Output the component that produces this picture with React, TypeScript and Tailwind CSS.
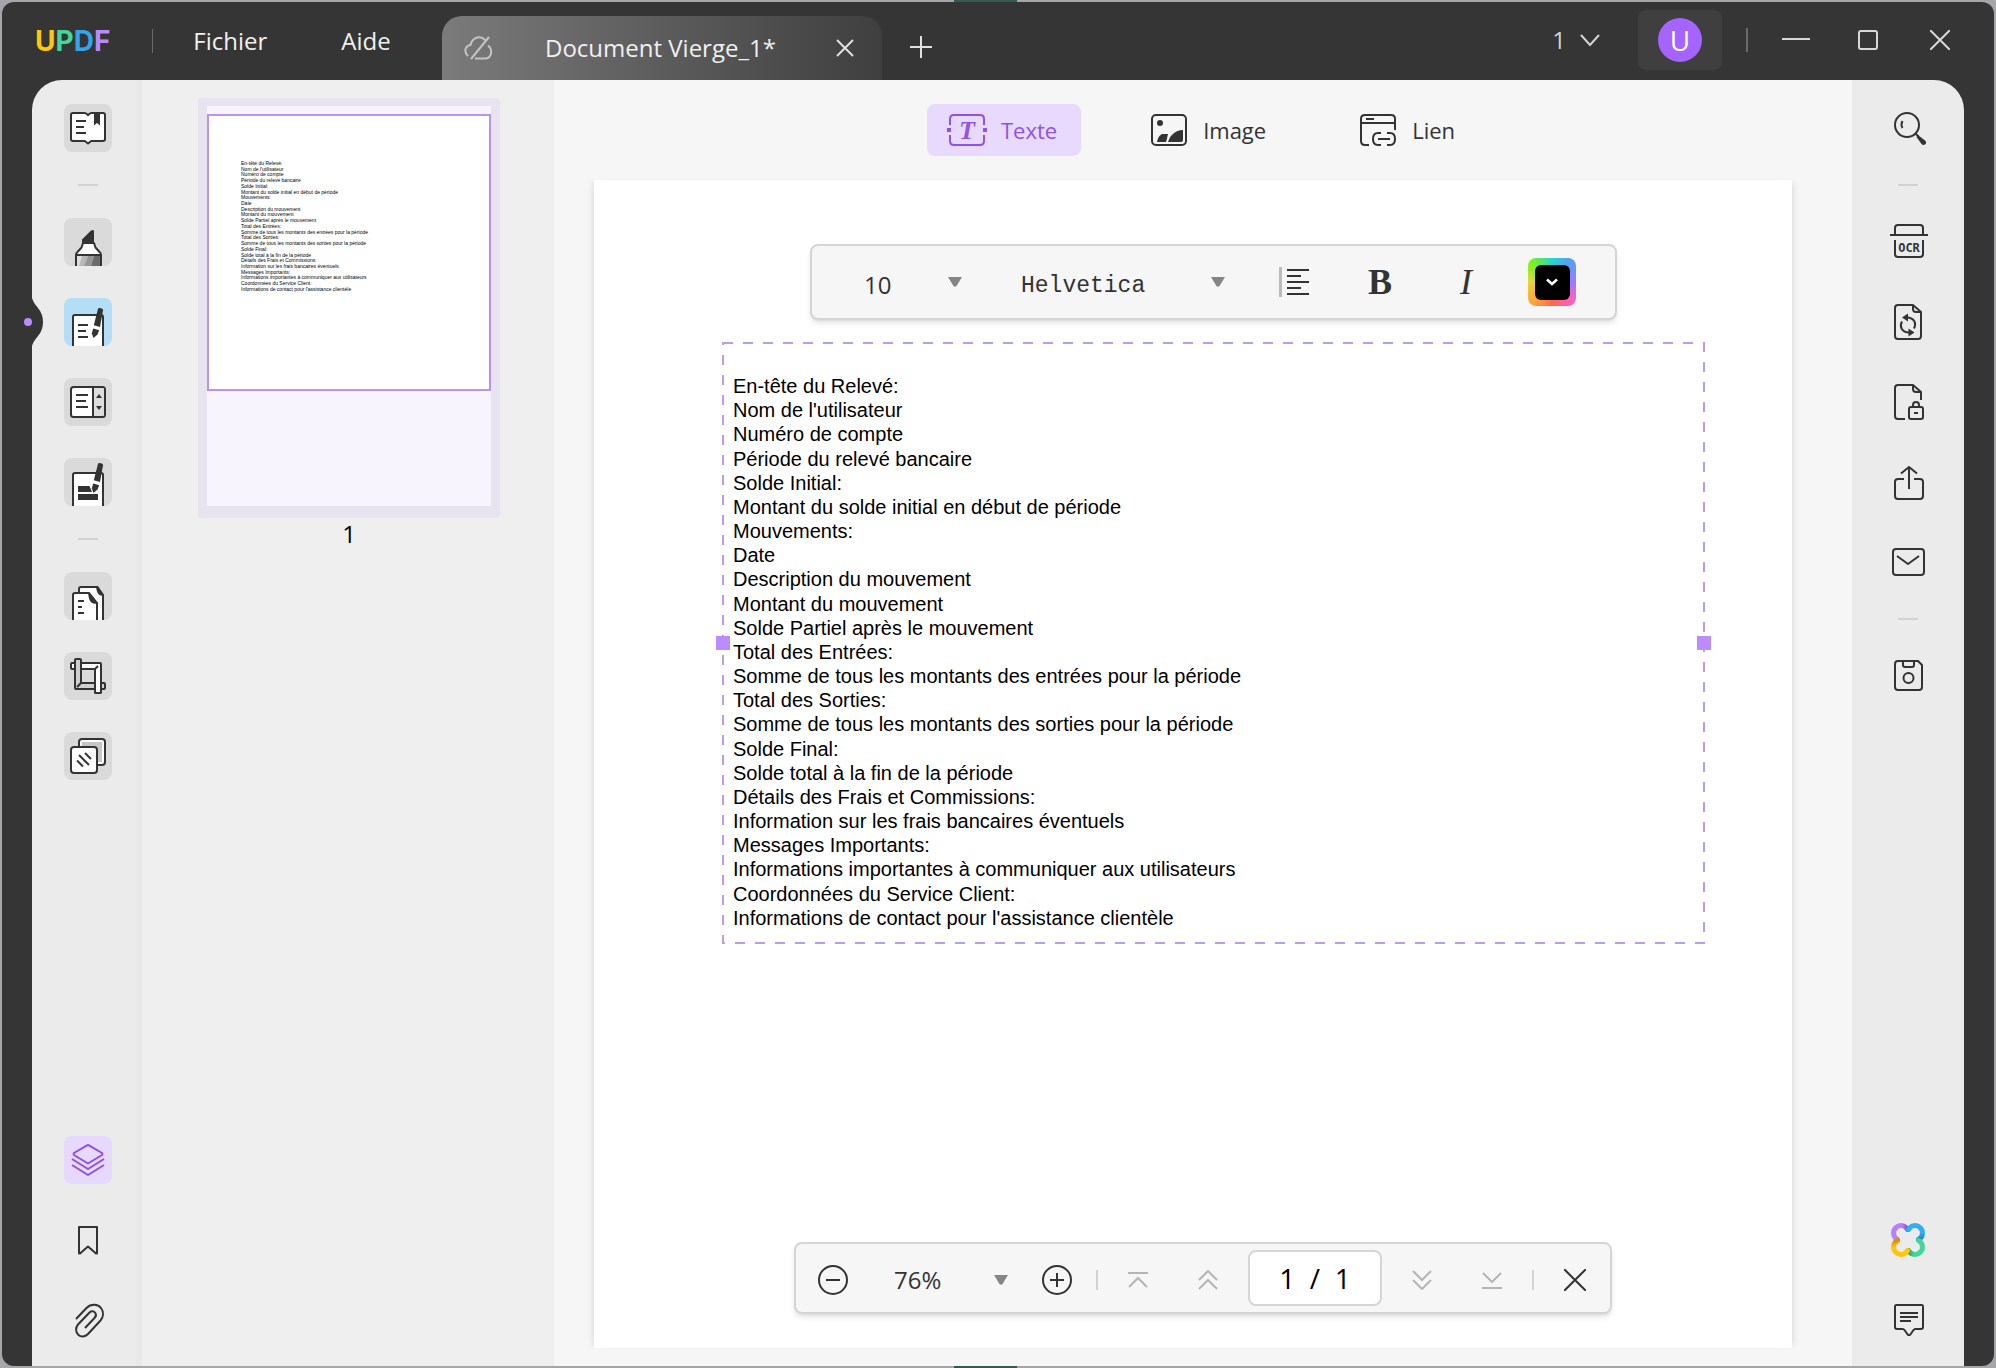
import React from 'react';

const LINES = [
  'En-tête du Relevé:',
  "Nom de l'utilisateur",
  'Numéro de compte',
  'Période du relevé bancaire',
  'Solde Initial:',
  'Montant du solde initial en début de période',
  'Mouvements:',
  'Date',
  'Description du mouvement',
  'Montant du mouvement',
  'Solde Partiel après le mouvement',
  'Total des Entrées:',
  'Somme de tous les montants des entrées pour la période',
  'Total des Sorties:',
  'Somme de tous les montants des sorties pour la période',
  'Solde Final:',
  'Solde total à la fin de la période',
  'Détails des Frais et Commissions:',
  'Information sur les frais bancaires éventuels',
  'Messages Importants:',
  'Informations importantes à communiquer aux utilisateurs',
  'Coordonnées du Service Client:',
  "Informations de contact pour l'assistance clientèle",
];

type IconProps = { children: React.ReactNode };

// every rail icon is drawn on a 48px grid
const Icon: React.FC<IconProps> = ({ children }) => (
  <svg viewBox="0 0 48 48" className="w-12 h-12" fill="none" stroke="#333333" strokeWidth="2" strokeLinejoin="round">
    {children}
  </svg>
);

const Pen: React.FC<{ y?: number }> = ({ y = 0 }) => (
  <g transform={`translate(0 ${y})`} stroke="none" fill="#333333">
    <path d="M34 10.8q.4-1 1.400-.8l2.400.6q1.400.5 1.200 1.700L36 29l-6.200-1.700z" />
    <path d="M29.200 30.500l6 1.700-1.700 4.300-4 3.500-1.700-4.500z" />
    <path d="M28 28.500l8.500 2.300" stroke="#ffffff" strokeWidth="1.500" />
  </g>
);

const ReaderIcon = () => (
  <Icon>
    <path d="M9 9h11.500q2 0 3.500 2.200Q25.500 9 27.500 9H39q2 0 2 2v24q0 2-2 2H27.500q-1 0-1.500 1l-2 1.500-2-1.500q-.5-1-1.500-1H9q-2 0-2-2V11q0-2 2-2z" fill="#fff" />
    <path d="M12 17h10M12 23h8M12 29h10" />
    <path d="M30 9h6v12.500l-3-2.500-3 2.500z" fill="#333" stroke="none" />
  </Icon>
);

const MarkerIcon = () => (
  <Icon>
    <path d="M12 50V37q0-2 1.500-3l4-4.500L19 25h11l1.500 4.500 4 4.500q1.500 1 1.500 3v13z" fill="#fff" />
    <path d="M13 38h23v10H13z" fill="#dfdfdf" stroke="none" />
    <path d="M18 38h6l-4 10h-5z" fill="#b9b9b9" stroke="none" />
    <path d="M24 38h6l-3 10h-7z" fill="#969696" stroke="none" />
    <path d="M30 38h6v10h-9z" fill="#6c6c6c" stroke="none" />
    <path d="M12 37h25" />
    <path d="M18 25v-3.500l8.500-8.500q3.500-2 3.500.5V25z" fill="#333" stroke="none" />
  </Icon>
);

const EditIcon = () => (
  <Icon>
    <path d="M9 50V19q0-2 2-2h26q2 0 2 2v31z" fill="#fff" />
    <path d="M14 27h10M14 33h8M14 39h10" />
    <Pen />
  </Icon>
);

const FormIcon = () => (
  <Icon>
    <rect x="7" y="9" width="34" height="30" rx="2.500" fill="#fff" />
    <path d="M30 10h8.500q1.500 0 1.500 1.500v25q0 1.500-1.500 1.500H30z" fill="#dddddd" stroke="none" />
    <path d="M29 9v30M12 17h12M12 23h10M12 29h12" />
    <path d="M32 20h6l-3-4zM32 28h6l-3 4z" fill="#333" stroke="none" />
  </Icon>
);

const RedactIcon = () => (
  <Icon>
    <path d="M9 50V17q0-2 2-2h26q2 0 2 2v33z" fill="#fff" />
    <path d="M14 28h11.500l2.500 6H14zM14 36h20v6H14z" fill="#333" stroke="none" />
    <Pen y={-5} />
  </Icon>
);

const PagesIcon = () => (
  <Icon>
    <path d="M15 22v-5q0-2 2-2h16l6 8v27H15z" fill="#fff" />
    <path d="M32 14h2l6 9v1q-5-.5-6-2.500-1.500-2-2-7.500z" fill="#333" stroke="none" />
    <path d="M9 50V23q0-2 2-2h14l8 10v19z" fill="#fff" />
    <path d="M24 20h1l9 11v1q-6 0-7.500-2.500Q24.500 27 24 20z" fill="#333" stroke="none" />
    <path d="M14 29h6M14 35h4M14 41h6" />
  </Icon>
);

const CropIcon = () => (
  <Icon>
    <path d="M8 11h28q1 0 1 1v28q0 1-1 1h-4q-1 0-1-1V17H8q-1 0-1-1v-4q0-1 1-1z" fill="#fff" />
    <path d="M12 7h4q1 0 1 1v23h23q1 0 1 1v4q0 1-1 1H12q-1 0-1-1V8q0-1 1-1z" fill="#cfcfcf" />
    <path d="M32 24v16h4V24z" fill="#fff" stroke="none" />
    <path d="M31 24v16q0 1 1 1h4q1 0 1-1V24M13 35l4-4M31 17l3-3" />
  </Icon>
);

const WatermarkIcon = () => (
  <Icon>
    <rect x="15" y="7" width="26" height="26" rx="3" fill="#fff" />
    <path d="M18 10h20v20H18z" fill="#c6c6c6" stroke="none" />
    <rect x="7" y="15" width="26" height="26" rx="3" fill="#fff" />
    <path d="M13 28.500l6 6M15 23l10 10M21 21l6 6" />
  </Icon>
);

const LayersIcon = () => (
  <svg viewBox="0 0 48 48" className="w-12 h-12" fill="none" stroke="#8f4fe0" strokeWidth="2" strokeLinejoin="round">
    <path d="M23 9.300q1-.6 2 0l13 7.700q1 1 0 2l-14 8.500L10 19q-1-1 0-2z" />
    <path d="M8 23l16 10 16-10M8 29l16 10 16-10" />
  </svg>
);

const BookmarkIcon = () => (
  <Icon>
    <path d="M15 11h18v26.500h-1L24 30.500l-8 7h-1z" />
  </Icon>
);

const ClipIcon = () => (
  <Icon>
    <path d="M12 23L22.500 12C27 7.500 34 8 37 12c3 4 2.500 9-.5 12.500L24 38c-3 3-7 3.300-9.500 1-3.300-3-3-7.500-.5-10.500l11.500-12c2-1.800 4.300-1.500 5.500 0 1.400 1.800 1 4-.5 5.500L21 32" />
  </Icon>
);

const SearchIcon = () => (
  <Icon>
    <circle cx="23" cy="21" r="12" />
    <path d="M18.500 17q-2 3.500 0 7" />
    <path d="M31.500 29.500l3 3" />
    <path d="M34 31l7 5.500q2 2 .3 3.800-1.800 1.700-3.800-.3L32.500 33z" fill="#333" stroke="none" />
  </Icon>
);

const OcrIcon = () => (
  <Icon>
    <path d="M11 17V10q0-3 3-3h22q3 0 3 3v7M6 17h38M11 22v14q0 3 3 3h22q3 0 3-3V22" />
    <text x="25" y="34" textAnchor="middle" stroke="none" fill="#333" className="font-['DejaVu_Sans_Mono',monospace] font-bold text-[12px]">OCR</text>
  </Icon>
);

const ConvertIcon = () => (
  <Icon>
    <path d="M29 7H14q-3 0-3 3v28q0 3 3 3h20q3 0 3-3V14l-8-7v4q0 3 3 3h5" />
    <path d="M22 19.500q6-.5 8.500 4 1.500 3.500-.5 7M26 34.500q-6 .3-8.500-4-1.500-3.500.5-7" />
    <path d="M18 19.500l6-4v8zM30.500 34.500l-6-4v8z" fill="#333" stroke="none" />
  </Icon>
);

const ProtectIcon = () => (
  <Icon>
    <path d="M21 41h-7q-3 0-3-3V10q0-3 3-3h15l8 7v8M29 7v4q0 3 3 3h5" />
    <rect x="25" y="29" width="14" height="12" rx="2" />
    <path d="M29 29v-2q0-3 3-3t3 3v2M30 35h4" />
  </Icon>
);

const ShareIcon = () => (
  <Icon>
    <path d="M20 21h-6q-3 0-3 3v14q0 3 3 3h22q3 0 3-3V24q0-3-3-3h-6M25 31V9M17 15.500L25 9l8 6.500" />
  </Icon>
);

const MailIcon = () => (
  <Icon>
    <rect x="9" y="11" width="31" height="26" rx="3" />
    <path d="M13 18l11 8 11-8" />
  </Icon>
);

const SaveIcon = () => (
  <Icon>
    <path d="M14 9h20l4 4v22q0 3-3 3H14q-3 0-3-3V12q0-3 3-3z" />
    <path d="M19 9v4q0 2 2 2h7q2 0 2-2V9" />
    <circle cx="24.500" cy="26" r="5" />
  </Icon>
);

const AiIcon = () => (
  <svg viewBox="0 0 48 48" className="w-12 h-12" fill="none" strokeWidth="5" strokeLinecap="round">
    <defs>
      <linearGradient id="purple"><stop offset="0.6" stopColor="#b87fff" /><stop offset="1" stopColor="#8350c4" /></linearGradient>
      <linearGradient id="blue" x1="0" y1="0" x2="0" y2="1"><stop offset="0.5" stopColor="#2fb0f5" /><stop offset="1" stopColor="#1f7fcf" /></linearGradient>
      <linearGradient id="green" x1="1" x2="0"><stop offset="0.6" stopColor="#43d69b" /><stop offset="1" stopColor="#2f9c6d" /></linearGradient>
      <linearGradient id="yellow" x1="0" y1="1" x2="0" y2="0"><stop offset="0.5" stopColor="#ffc60a" /><stop offset="1" stopColor="#dd8d0c" /></linearGradient>
    </defs>
    <path d="M23.500 13.500A7.400 7.400 0 1 0 13.500 23.500" stroke="url(#purple)" />
    <path d="M34.500 23.500A7.400 7.400 0 1 0 24.500 13.500" stroke="url(#blue)" />
    <path d="M24.500 34.500A7.400 7.400 0 1 0 34.500 24.500" stroke="url(#green)" />
    <path d="M13.500 24.500A7.400 7.400 0 1 0 23.500 34.500" stroke="url(#yellow)" />
  </svg>
);

const CommentIcon = () => (
  <Icon>
    <path d="M12 9h26q1 0 1 1.500V31q0 2-2 2h-6l-1.500 1-3.500 5h-2l-3.500-5-1.500-1h-6q-2 0-2-2V10.500Q11 9 12 9z" />
    <path d="M16 17h18M16 21h18M16 25h11" />
  </Icon>
);

const TextToolIcon = () => (
  <svg viewBox="0 0 40 32" className="w-10 h-8" fill="none" stroke="#9152e6" strokeWidth="2">
    <path d="M3 11V5q0-4 4-4h26q4 0 4 4v6M3 21v6q0 4 4 4h26q4 0 4-4v-6" />
    <path d="M0 14h4v4H0zM36 14h4v4h-4z" fill="#9152e6" stroke="none" />
    <text x="20" y="25" textAnchor="middle" fill="#9152e6" stroke="none" className="font-['Liberation_Serif',serif] font-bold italic text-[26px]">T</text>
  </svg>
);

const ImageToolIcon = () => (
  <svg viewBox="0 0 40 32" className="w-10 h-8" fill="none" stroke="#333333" strokeWidth="2">
    <rect x="3" y="1" width="34" height="30" rx="4" />
    <circle cx="11" cy="9" r="3" fill="#333" stroke="none" />
    <path d="M8 28q1-6 5-8h6q-1 5-2 8zM19 28q2-6 5-8 4-4 10-4v10q0 2-2 2z" fill="#333" stroke="none" />
  </svg>
);

const LinkToolIcon = () => (
  <svg viewBox="0 0 40 32" className="w-10 h-8" fill="none" stroke="#333333" strokeWidth="2">
    <path d="M11 31H7q-4 0-4-4V5q0-4 4-4h26q4 0 4 4v11M3 9h34M8 5h8" />
    <path d="M23 19h-3q-5 0-5 6t5 6h3M29 19h3q5 0 5 6t-5 6h-3M20 25h12" />
  </svg>
);

const RailSeparator = () => <div className="w-5 h-0.5 bg-[#d2d2d2] shrink-0" />;

const leftTools = [
  { name: 'Lecteur', icon: ReaderIcon },
  null,
  { name: 'Commentaire', icon: MarkerIcon },
  { name: 'Modifier', icon: EditIcon, active: true },
  { name: 'Formulaire', icon: FormIcon },
  { name: 'Biffer', icon: RedactIcon },
  null,
  { name: 'Organiser', icon: PagesIcon },
  { name: 'Rogner', icon: CropIcon },
  { name: 'Filigrane', icon: WatermarkIcon },
];

const rightTools = [
  { name: 'Rechercher', icon: SearchIcon },
  null,
  { name: 'OCR', icon: OcrIcon },
  { name: 'Convertir', icon: ConvertIcon },
  { name: 'Protéger', icon: ProtectIcon },
  { name: 'Partager', icon: ShareIcon },
  { name: 'Envoyer', icon: MailIcon },
  null,
  { name: 'Enregistrer', icon: SaveIcon },
];

const editTools = [
  { name: 'Texte', icon: TextToolIcon, active: true },
  { name: 'Image', icon: ImageToolIcon },
  { name: 'Lien', icon: LinkToolIcon },
];

const Caret = () => (
  <svg viewBox="0 0 14 10" className="absolute right-0 top-1/2 -translate-y-1/2 w-3.5 h-2.5 pointer-events-none">
    <path d="M0 0h14L8.500 9q-1.500 1.500-3 0z" fill="#858585" />
  </svg>
);

const TitleBar = () => (
  <header className="h-[78px] shrink-0 flex items-center text-[#f0f0f0] text-2xl">
    <div className="w-[440px] shrink-0 flex items-center pl-[33px]">
      <div className="font-['Inter',sans-serif] font-bold text-[28px] leading-8">
        <span className="text-[#ffc60a]">U</span>
        <span className="text-[#43d69b]">P</span>
        <span className="text-[#36a3ec]">D</span>
        <span className="text-[#b88cff]">F</span>
      </div>
      <div className="w-px h-6 bg-[#6b6b6b] ml-[42px]" />
      <button className="ml-10">Fichier</button>
      <button className="ml-[74px]">Aide</button>
    </div>
    <div className="w-[440px] h-16 self-end flex items-center pl-[22px] pr-7 rounded-t-[20px] bg-linear-to-r from-[#7b7b7b] to-[#3f3f3f]">
      <svg viewBox="0 0 28 24" className="w-7 h-6" fill="none" stroke="#c4c4c4" strokeWidth="2">
        <path d="M4 20q-4-4-2-8 1.500-3 4.500-3Q8 3 13 1.500 18 .5 21 4M24 9.500q4 3 3 8-1 4.500-5 5H11M25 1L7 23" />
      </svg>
      <span className="ml-[53px]">Document Vierge_1*</span>
      <button aria-label="Fermer l'onglet" className="ml-auto">
        <svg viewBox="0 0 18 18" className="w-[18px] h-[18px]" fill="none" stroke="#e0e0e0" strokeWidth="2">
          <path d="M1 1l16 16M17 1L1 17" />
        </svg>
      </button>
    </div>
    <button aria-label="Nouvel onglet" className="ml-7 mt-3">
      <svg viewBox="0 0 22 22" className="w-[22px] h-[22px]" fill="none" stroke="#e0e0e0" strokeWidth="2">
        <path d="M11 0v22M0 11h22" />
      </svg>
    </button>
    <div className="ml-auto flex items-center pr-11 pb-0.5">
      <button className="flex items-center gap-3.5 text-[#d4d4d4]">
        1
        <svg viewBox="0 0 20 12" className="w-5 h-3" fill="none" stroke="#d4d4d4" strokeWidth="2">
          <path d="M1 1l9 10 9-10" />
        </svg>
      </button>
      <button className="ml-[38px] w-[84px] h-[60px] rounded-lg bg-[#3f3f3f] flex items-center justify-center">
        <span className="w-11 h-11 rounded-full bg-[#a563ff] text-white text-[28px] leading-11">U</span>
      </button>
      <div className="ml-6 w-0.5 h-6 bg-[#6b6b6b]" />
      <div className="ml-[34px] flex items-center gap-12">
        <button aria-label="Réduire">
          <svg viewBox="0 0 28 20" className="w-7 h-5" stroke="#d8d8d8" strokeWidth="2"><path d="M0 9h28" /></svg>
        </button>
        <button aria-label="Agrandir" className="pr-1">
          <svg viewBox="0 0 20 20" className="w-5 h-5" fill="none" stroke="#d8d8d8" strokeWidth="2"><rect x="1" y="1" width="18" height="18" rx="2" /></svg>
        </button>
        <button aria-label="Fermer">
          <svg viewBox="0 0 20 20" className="w-5 h-5" fill="none" stroke="#d8d8d8" strokeWidth="2"><path d="M0 0l20 20M20 0L0 20" /></svg>
        </button>
      </div>
    </div>
  </header>
);

const LeftRail = () => (
  <aside className="relative w-[110px] shrink-0 flex flex-col justify-between items-start pt-6 pb-[22px] pl-8 bg-[#ebebeb] border-r-6 border-[#e8e8e8] rounded-tl-[30px]">
    <div className="flex flex-col items-center gap-8">
      {leftTools.map((tool, i) =>
        tool ? (
          <button
            key={tool.name}
            aria-label={tool.name}
            className={`w-12 h-12 rounded-lg overflow-hidden ${tool.active ? 'bg-[#b4def6]' : 'bg-[#dadada]'}`}
          >
            <tool.icon />
          </button>
        ) : (
          <RailSeparator key={i} />
        )
      )}
    </div>
    <div className="flex flex-col gap-8">
      <button aria-label="Vignettes" className="w-12 h-12 rounded-lg bg-[#e6d9fd]"><LayersIcon /></button>
      <button aria-label="Signets" className="w-12 h-12"><BookmarkIcon /></button>
      <button aria-label="Pièces jointes" className="w-12 h-12"><ClipIcon /></button>
    </div>
    {/* notch pointing at the active tool */}
    <svg viewBox="0 0 20 48" className="absolute -left-2 top-[218px] w-5 h-12">
      <path d="M0 0h8q1 4 6 10 5 6 5 14t-5 14q-5 6-6 10H0z" fill="#353535" />
      <circle cx="4" cy="24" r="4" fill="#ba8cff" />
    </svg>
  </aside>
);

const Thumbnails = () => (
  <section className="w-[412px] shrink-0 bg-[#efefef] flex flex-col items-center pt-[18px] pl-0.5">
    <button className="w-[302px] h-[420px] rounded bg-[#e8e4ef] px-[9px] pt-2 pb-3 text-left">
      <div className="h-full bg-[#f8f4fe] pt-2">
        <div className="h-[277px] bg-white border-2 border-[#b894ec] pt-[45px] pl-8 overflow-hidden">
          <div className="h-[131px] flex flex-col justify-between font-['Liberation_Sans',Arial,sans-serif] text-[5px] leading-[5px] text-black">
            {LINES.map((line) => (
              <p key={line} className="whitespace-nowrap">{line}</p>
            ))}
          </div>
        </div>
      </div>
    </button>
    <p className="text-2xl text-black">1</p>
  </section>
);

const FormatBar = () => (
  <div className="self-center w-[807px] h-[76px] flex items-center pl-[52px] pr-[39px] rounded-lg border-2 border-[#d5d5d5] bg-[#f6f6f6] shadow-md text-[#333333]">
    <div className="relative w-[98px]">
      <select aria-label="Taille" className="block w-full h-12 pt-1.5 appearance-none bg-transparent text-2xl outline-none">
        <option>10</option>
      </select>
      <Caret />
    </div>
    <div className="relative ml-[59px] w-[204px]">
      <select aria-label="Police" className="block w-full h-12 pt-2 appearance-none bg-transparent font-['Liberation_Mono',monospace] text-[23px] outline-none">
        <option>Helvetica</option>
      </select>
      <Caret />
    </div>
    <div className="ml-auto flex items-center gap-[38px]">
      <button aria-label="Alignement" className="w-12 h-12 flex items-center justify-center">
        <svg viewBox="0 0 30 30" className="w-[30px] h-[30px]" fill="none" strokeWidth="2">
          <path d="M1.500 0v30" stroke="#bbbbbb" strokeWidth="3" />
          <path d="M8 3h22M8 9h14M8 15h22M8 21h14M8 27h22" stroke="#333" />
        </svg>
      </button>
      <button className="w-12 h-12 font-['Liberation_Serif',serif] font-bold text-4xl">B</button>
      <button className="w-12 h-12 font-['Liberation_Serif',serif] italic text-4xl">I</button>
      <button
        aria-label="Couleur"
        className="w-12 h-12 rounded-lg flex items-center justify-center bg-[conic-gradient(#1fd8d0,#5b9cf5_12%,#9a7bff_25%,#ff5fc0_37%,#ff6a4d_50%,#ffa53a_62%,#e8d53a_75%,#7cf01f_87%,#1fd8d0)]"
      >
        <span className="w-[35px] h-[35px] rounded-md bg-black flex items-center justify-center">
          <svg viewBox="0 0 12 8" className="w-3 h-2" fill="none" stroke="#fff" strokeWidth="2.500"><path d="M1 1.500l5 4.500 5-4.500" /></svg>
        </span>
      </button>
    </div>
  </div>
);

const TextBlock = () => (
  <div className="relative mt-[23px] h-[600px] pt-[31px] pl-2.5 pb-[13px]">
    <div className="h-full flex flex-col justify-between font-['Liberation_Sans',Arial,sans-serif] text-xl leading-6 text-black">
      {LINES.map((line) => (
        <p key={line} className="whitespace-nowrap">{line}</p>
      ))}
    </div>
    <svg className="absolute inset-0 w-full h-full overflow-visible" fill="none" stroke="#bd9bee" strokeWidth="2" strokeDasharray="10 10">
      <rect width="100%" height="100%" />
    </svg>
    <div className="absolute -left-[7px] top-1/2 -translate-y-1/2 w-3.5 h-3.5 bg-[#ba8cff]" />
    <div className="absolute -right-[7px] top-1/2 -translate-y-1/2 w-3.5 h-3.5 bg-[#ba8cff]" />
  </div>
);

type NavProps = { label: string; d: string };

const NavButton: React.FC<NavProps> = ({ label, d }) => (
  <button aria-label={label}>
    <svg viewBox="0 0 20 20" className="w-5 h-5" fill="none" stroke="#b5b5b5" strokeWidth="2"><path d={d} /></svg>
  </button>
);

const ZoomBar = () => (
  <div className="absolute bottom-[52px] left-1/2 -translate-x-1/2 w-[818px] h-[72px] flex items-center gap-[30px] pt-1 pl-[22px] pr-6 rounded-lg border-2 border-[#d5d5d5] bg-[#f6f6f6] shadow-md text-[#333333]">
    <div className="flex items-center gap-[34px]">
      <button aria-label="Zoom arrière">
        <svg viewBox="0 0 30 30" className="w-[30px] h-[30px]" fill="none" stroke="#333" strokeWidth="2"><circle cx="15" cy="15" r="14" /><path d="M8 15h14" /></svg>
      </button>
      <div className="relative w-[126px]">
        <select aria-label="Zoom" className="block w-full h-10 pl-3 appearance-none bg-transparent text-2xl outline-none">
          <option>76%</option>
        </select>
        <Caret />
      </div>
      <button aria-label="Zoom avant">
        <svg viewBox="0 0 30 30" className="w-[30px] h-[30px]" fill="none" stroke="#333" strokeWidth="2"><circle cx="15" cy="15" r="14" /><path d="M8 15h14M15 8v14" /></svg>
      </button>
    </div>
    <div className="w-0.5 h-5 -ml-1.5 bg-[#d2d2d2]" />
    <div className="flex items-center gap-[50px]">
      <NavButton label="Première page" d="M0 3h20M1 17l9-9 9 9" />
      <NavButton label="Page précédente" d="M1 10l9-9 9 9M1 19l9-9 9 9" />
    </div>
    <input
      aria-label="Page"
      defaultValue="1  /  1"
      className="w-[134px] h-14 mb-1 rounded-lg border-2 border-[#d5d5d5] bg-white text-center text-[28px] text-black outline-none"
    />
    <div className="flex items-center gap-[50px]">
      <NavButton label="Page suivante" d="M1 1l9 9 9-9M1 10l9 9 9-9" />
      <NavButton label="Dernière page" d="M1 3l9 9 9-9M0 18h20" />
    </div>
    <div className="w-0.5 h-5 bg-[#d2d2d2]" />
    <button aria-label="Fermer la barre">
      <svg viewBox="0 0 22 22" className="w-[22px] h-[22px]" fill="none" stroke="#333" strokeWidth="2"><path d="M0 0l22 22M22 0L0 22" /></svg>
    </button>
  </div>
);

const Editor = () => (
  <main className="relative flex-1 flex flex-col bg-[#f6f6f6]">
    <nav className="h-[100px] shrink-0 flex items-center justify-center gap-12">
      {editTools.map((tool) => (
        <button
          key={tool.name}
          className={`h-[52px] flex items-center gap-3.5 pl-5 pr-6 rounded-lg text-[22px] ${
            tool.active ? 'bg-[#e7dafe] text-[#9152e6]' : 'text-[#333333]'
          }`}
        >
          <tool.icon />
          {tool.name}
        </button>
      ))}
    </nav>
    <div className="flex-1 ml-10 mr-[60px] mb-[18px] pt-16 pl-[129px] pr-[88px] flex flex-col bg-white shadow-[-5px_0_5px_-3px_#00000018,5px_0_5px_-3px_#00000018]">
      <FormatBar />
      <TextBlock />
    </div>
    <ZoomBar />
  </main>
);

const RightRail = () => (
  <aside className="w-28 shrink-0 flex flex-col justify-between items-center pt-6 pb-[22px] bg-[#ebebeb] rounded-tr-[30px]">
    <div className="flex flex-col items-center gap-8">
      {rightTools.map((tool, i) =>
        tool ? (
          <button key={tool.name} aria-label={tool.name} className="w-12 h-12">
            <tool.icon />
          </button>
        ) : (
          <RailSeparator key={i} />
        )
      )}
    </div>
    <div className="flex flex-col gap-8">
      <button aria-label="UPDF AI" className="w-12 h-12"><AiIcon /></button>
      <button aria-label="Commentaires" className="w-12 h-12"><CommentIcon /></button>
    </div>
  </aside>
);

export default function App() {
  return (
    <div className="h-screen p-0.5 bg-[linear-gradient(90deg,#a6a6a8_954px,#305a52_954px,#305a52_1017px,#a6a6a8_1017px)] font-['Open_Sans','Noto_Sans',sans-serif]">
      <div className="h-full flex flex-col rounded-xl overflow-hidden bg-[#353535]">
        <TitleBar />
        <div className="flex-1 min-h-0 mx-[30px] flex">
          <LeftRail />
          <Thumbnails />
          <Editor />
          <RightRail />
        </div>
      </div>
    </div>
  );
}
